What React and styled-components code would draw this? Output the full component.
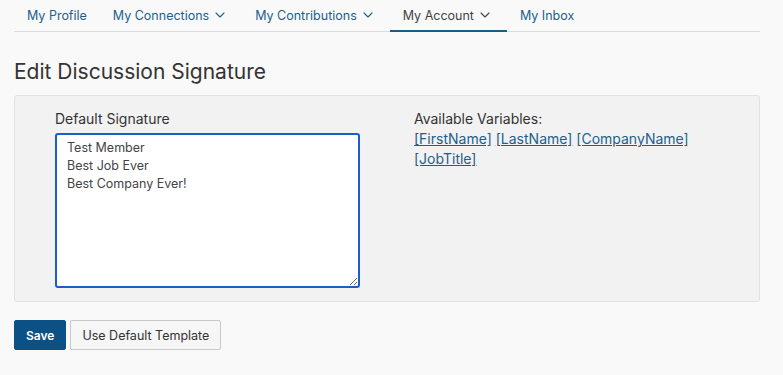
import React from 'react';
import styled, { createGlobalStyle } from 'styled-components';
import { ChevronDown } from 'lucide-react';

const GlobalStyle = createGlobalStyle`
  body {
    margin: 0;
    background: #f9f9f9;
    font-family: Inter, "Noto Sans", sans-serif;
    color: #333;
  }
`
const Page = styled.div`
  padding: 0 23px 20px 14px;
`
const Nav = styled.nav`
  display: flex;
  height: 31px;
  border-bottom: 1px solid #dcdcdc;
`
const Tab = styled.a`
  display: flex;
  align-items: center;
  padding: 0 13px;
  font-size: 12.5px;
  color: ${(p) => (p.$active ? '#444' : '#1d5f8d')};
  border-bottom: 2px solid ${(p) => (p.$active ? '#1b5b8a' : 'transparent')};
  margin-bottom: -1px;
  text-decoration: none;
  cursor: pointer;
  svg {
    margin-left: 3px;
    margin-right: 1px;
  }
`
const Title = styled.h1`
  margin: 28px 0 11px;
  font-size: 21px;
  font-weight: 400;
  line-height: 24px;
  color: #333;
`
const Panel = styled.div`
  display: grid;
  grid-template-columns: 305px 1fr;
  column-gap: 54px;
  padding: 13px 40px 13px 40px;
  background: #f2f2f2;
  border: 1px solid #e2e2e2;
  border-radius: 3px;
`
const Field = styled.div`
  display: flex;
  flex-direction: column;
`
const Label = styled.label`
  font-size: 14px;
  line-height: 20px;
  color: #333;
  margin-bottom: 4px;
`
const TextArea = styled.textarea`
  display: block;
  box-sizing: border-box;
  width: 305px;
  height: 155px;
  padding: 4px 10px;
  border: 2px solid #1a5fc9;
  border-radius: 3px;
  background: #fff;
  font-family: Inter, "Noto Sans", sans-serif;
  font-size: 12.5px;
  line-height: 18px;
  color: #444;
  outline: none;
`
const Vars = styled.div`
  font-size: 14px;
  line-height: 20px;
  color: #333;
`
const VarLink = styled.a`
  color: #1d5f8d;
  text-decoration: underline;
  cursor: pointer;
`
const Actions = styled.div`
  display: flex;
  gap: 4px;
  margin-top: 18px;
`
const Button = styled.button`
  height: 30px;
  padding: 0 11px;
  font-family: Inter, "Noto Sans", sans-serif;
  font-size: ${(p) => (p.$primary ? '12px' : '12.5px')};
  font-weight: ${(p) => (p.$primary ? 600 : 400)};
  color: ${(p) => (p.$primary ? '#fff' : '#333')};
  background: ${(p) => (p.$primary ? '#0b5185' : '#f6f6f6')};
  border: 1px solid ${(p) => (p.$primary ? '#0b5185' : '#c9c9c9')};
  border-radius: 2px;
  cursor: pointer;
`

const tabs = [
  { label: 'My Profile' },
  { label: 'My Connections', menu: true },
  { label: 'My Contributions', menu: true },
  { label: 'My Account', menu: true, active: true },
  { label: 'My Inbox' },
];

const variables = ['[FirstName]', '[LastName]', '[CompanyName]', '[JobTitle]'];

export default function App() {
  return <>
    <GlobalStyle />
    <Page>
      <Nav>
        {tabs.map((t) => (
          <Tab key={t.label} $active={t.active}>
            {t.label}
            {t.menu ? <ChevronDown size={16} strokeWidth={1.6} /> : null}
          </Tab>
        ))}
      </Nav>
      <Title>Edit Discussion Signature</Title>
      <Panel>
        <Field>
          <Label htmlFor="sig">Default Signature</Label>
          <TextArea id="sig" defaultValue={'Test Member\nBest Job Ever\nBest Company Ever!'} />
        </Field>
        <Vars>
          Available Variables:<br />
          {variables.map((v, i) => (
            <React.Fragment key={v}>
              <VarLink>{v}</VarLink>{i < variables.length - 1 ? ' ' : null}
            </React.Fragment>
          ))}
        </Vars>
      </Panel>
      <Actions>
        <Button $primary>Save</Button>
        <Button>Use Default Template</Button>
      </Actions>
    </Page>
  </>
}
